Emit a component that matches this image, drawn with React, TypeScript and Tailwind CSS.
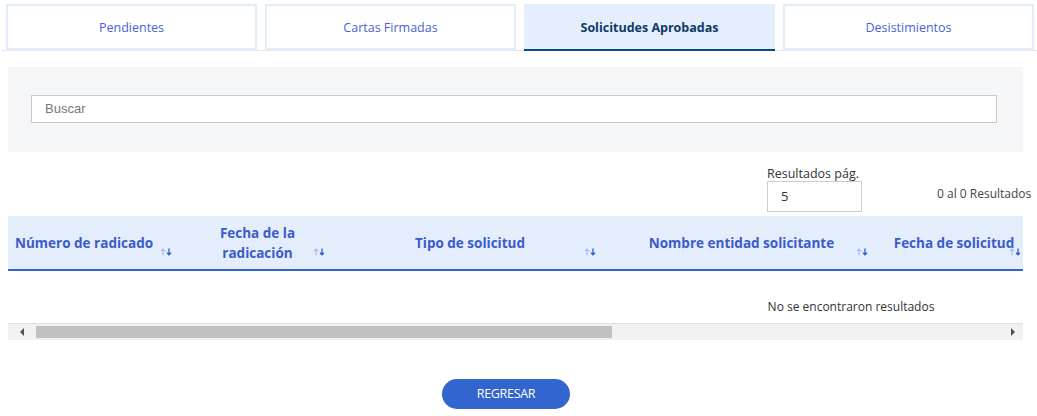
import React from 'react'

const tabs = ['Pendientes', 'Cartas Firmadas', 'Solicitudes Aprobadas', 'Desistimientos']

function SortIcon() {
  return (
    <svg width="12" height="8" viewBox="0 0 12 8" className="block">
      <path d="M3 7.5V1.2M1 3.2L3 1.2L5 3.2" stroke="#a9c1ee" strokeWidth="1.3" fill="none" />
      <path d="M9 0.5V6.8M7 4.8L9 6.8L11 4.8" stroke="#2f5bc8" strokeWidth="1.3" fill="none" />
    </svg>
  )
}

const columns = [
  { label: 'Número de radicado', w: 'w-[172px]', align: 'text-left pl-[7px]', icon: 'right-[8px]' },
  { label: 'Fecha de la radicación', w: 'w-[155px]', align: 'text-center px-[30px]', icon: 'right-[10px]' },
  { label: 'Tipo de solicitud', w: 'w-[270px]', align: 'text-center', icon: 'right-[9px]' },
  { label: 'Nombre entidad solicitante', w: 'w-[273px]', align: 'text-center', icon: 'right-[10px]' },
  { label: 'Fecha de solicitud', w: 'w-[152px]', align: 'text-center', icon: 'right-[9px]' },
  { label: '', w: 'w-[200px]', align: 'text-center', icon: 'right-[10px]' },
  { label: '', w: 'w-[464px]', align: 'text-center', icon: 'right-[10px]' },
]

export default function App() {
  return (
    <div className="w-[1037px] h-[416px] bg-white overflow-hidden font-['Open_Sans',sans-serif]">
      {/* tabs */}
      <div className="pt-[4px] pl-[4px] flex gap-[8px] border-b border-[#e6e6e6] ml-[2px]">
        {tabs.map((t, i) =>
          i === 2 ? (
            <div
              key={t}
              className="w-[251px] h-[47px] -mb-px flex items-center justify-center pt-[3px] bg-[#e4eefc] border-b-2 border-[#0b4a8a] text-[12.5px] font-bold text-[#0d3a66]"
            >
              {t}
            </div>
          ) : (
            <div
              key={t}
              className="w-[251px] h-[46px] flex items-center justify-center pt-[3px] bg-white border-2 border-[#e2ecfb] text-[12.5px] text-[#4b5fd6]"
            >
              {t}
            </div>
          )
        )}
      </div>

      {/* search */}
      <div className="mx-[8px] mt-[16px] w-[1015px] bg-[#f5f6f8] pt-[28px] pb-[29px] pl-[23px] pr-[26px]">
        <div className="h-[28px] bg-white border border-[#c9c9c9] flex items-center pl-[13px] text-[13px] text-[#777] font-['Liberation_Sans',sans-serif]">
          Buscar
        </div>
      </div>

      {/* page size */}
      <div className="flex items-end mt-[13px] h-[47px]">
        <div className="ml-[767px] w-[95px] flex flex-col">
          <span className="text-[12.5px] leading-[17px] text-[#333] whitespace-nowrap">Resultados pág.</span>
          <div className="mt-[-1px] w-[95px] h-[31px] border border-[#ccc] flex items-center pl-[13px] text-[13px] text-[#333]">5</div>
        </div>
        <span className="ml-[75px] mb-[9px] text-[12px] text-[#444] whitespace-nowrap">0 al 0 Resultados</span>
      </div>

      {/* table */}
      <div className="mx-[8px] mt-[4px] w-[1015px] overflow-hidden">
        <div className="w-[1686px]">
          <div className="flex h-[55px] bg-[#e4edfc] border-b-2 border-[#3563c9]">
            {columns.map((c, i) => (
              <div key={i} className={`relative ${c.w} shrink-0 flex items-center`}>
                {c.label && (
                  <span className={`w-full ${c.align} text-[13.5px] font-bold leading-[20px] text-[#3a5bcb] whitespace-nowrap`}>
                    {c.label === 'Fecha de la radicación' ? (
                      <span className="whitespace-normal block">{c.label}</span>
                    ) : (
                      c.label
                    )}
                  </span>
                )}
                {c.label && (
                  <span className={`absolute top-[32px] ${c.icon}`}>
                    <SortIcon />
                  </span>
                )}
              </div>
            ))}
          </div>
          <div className="h-[52px] flex items-end justify-center pb-[7px] text-[12px] text-[#333]">
            No se encontraron resultados
          </div>
        </div>
        {/* scrollbar */}
        <div className="h-[17px] bg-[#f1f1f1] border-t border-[#e0e0e0] flex items-center">
          <div className="w-[28px] flex justify-center">
            <svg width="5" height="8" viewBox="0 0 5 8"><path d="M4 0L0 4L4 8Z" fill="#505050" /></svg>
          </div>
          <div className="w-[576px] h-[12px] bg-[#c1c1c1]" />
          <div className="flex-1" />
          <div className="w-[22px] flex justify-center">
            <svg width="5" height="8" viewBox="0 0 5 8"><path d="M1 0L5 4L1 8Z" fill="#505050" /></svg>
          </div>
        </div>
      </div>

      {/* button */}
      <div className="flex mt-[39px] pl-[442px]">
        <button className="w-[128px] h-[30px] rounded-full bg-[#3265cf] text-white text-[12.5px] tracking-[-0.3px]">
          REGRESAR
        </button>
      </div>
    </div>
  )
}
